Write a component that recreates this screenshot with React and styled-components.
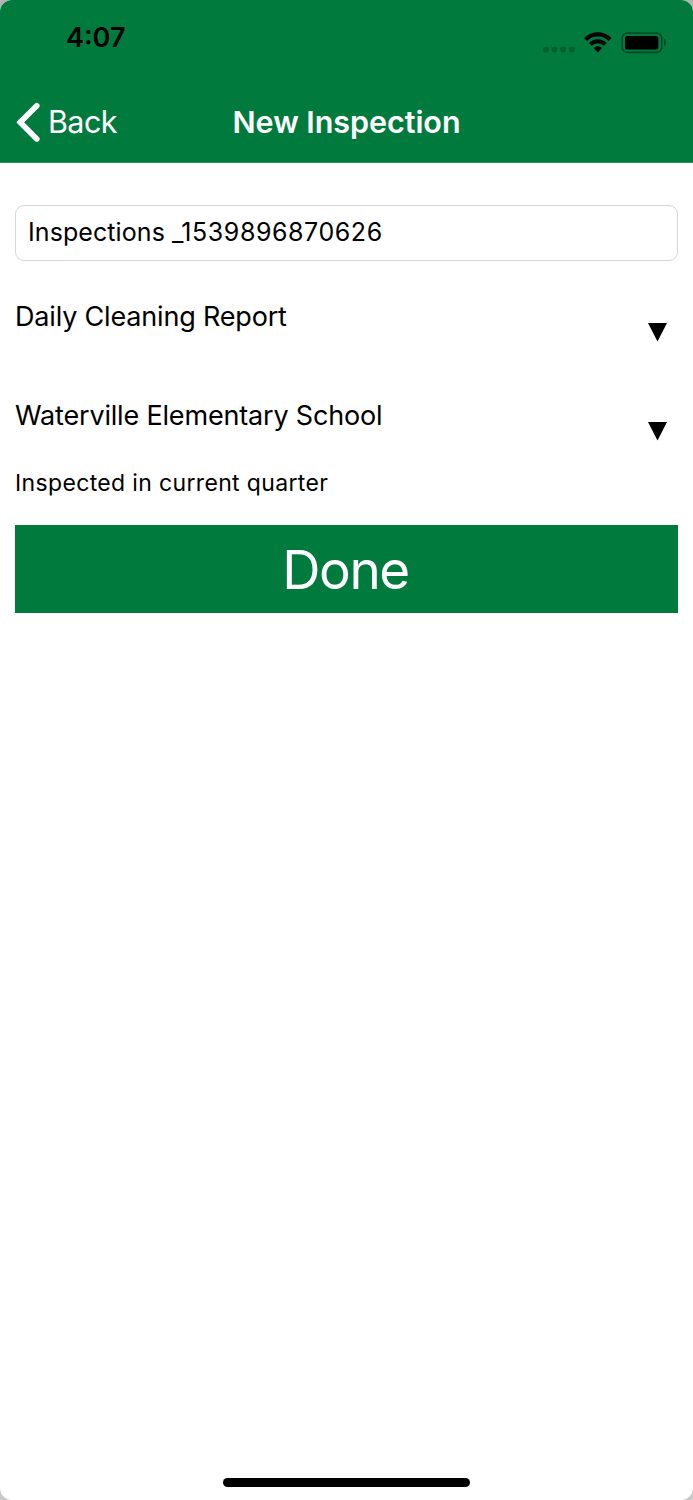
import styled, { createGlobalStyle } from "styled-components";

export default function App() {
  return (
    <>
      <GlobalStyle />
      <Phone>
        <Header>
          <StatusBar>
            <Clock>4:07</Clock>
            <StatusIcons />
          </StatusBar>
          <NavBar>
            <BackButton>
              <svg width="26" height="40" viewBox="0 0 26 40" fill="none">
                <path d="M21.8 3.7 L5.2 20.3 L21.8 36.9" stroke="#fff" strokeWidth="5.6" strokeLinecap="round" strokeLinejoin="miter" />
              </svg>
              <span>Back</span>
            </BackButton>
            <Title>New Inspection</Title>
          </NavBar>
        </Header>

        <Form>
          <NameField>
            Inspections <NameStamp>_1539896870626</NameStamp>
          </NameField>
          <Picker label="Daily Cleaning Report" />
          <Picker label="Waterville Elementary School" />
          <Hint>Inspected in current quarter</Hint>
          <DoneButton>Done</DoneButton>
        </Form>

        <HomeIndicator />
      </Phone>
    </>
  );
}

const Picker = ({ label }) => (
  <PickerRow>
    <PickerLabel>{label}</PickerLabel>
    <Caret width="20" height="19" viewBox="0 0 20 19">
      <path d="M0 0 H19 L9.5 18.4 Z" />
    </Caret>
  </PickerRow>
);

const StatusIcons = () => (
  <Icons>
    <svg width="32" height="24" viewBox="0 0 32 24" fill="#000" fillOpacity="0.22">
      {[0, 8.7, 17.4, 26.1].map(x => (
        <rect key={x} x={x} y="16.8" width="5.6" height="5.6" rx="1.8" />
      ))}
    </svg>
    <svg width="28" height="24" viewBox="0 0 28 24" fill="none" stroke="#000" strokeWidth="4.2">
      <path d="M1.5 9.4 C8.4 2.7 19.2 2.7 26.1 9.4" />
      <path d="M6.3 14.3 C10.6 10.2 17 10.2 21.3 14.3" strokeWidth="3.8" />
      <path d="M9.6 18 C12.1 15.7 15.5 15.7 18 18 L13.8 22.4 Z" fill="#000" stroke="none" />
    </svg>
    <svg width="46" height="24" viewBox="0 0 46 24">
      <rect x="1.2" y="3" width="39.6" height="19.4" rx="5.2" fill="none" stroke="#000" strokeOpacity="0.4" strokeWidth="1.6" />
      <rect x="4" y="5.9" width="33.4" height="13.6" rx="2.6" />
      <path d="M43.1 9.1 C45.6 10.3 45.6 15.1 43.1 16.3 Z" fillOpacity="0.45" />
    </svg>
  </Icons>
);

// ======= STYLED COMPONENTS ======= //

const GlobalStyle = createGlobalStyle`
  * {
    box-sizing: border-box;
  }

  body {
    margin: 0;
    background: linear-gradient(#b4b4b4, #c8c8c8);
    font-family: Inter, "Liberation Sans", sans-serif;
    color: #000;
  }

  button {
    font-family: inherit;
  }
`;

const Phone = styled.div`
  display: flex;
  flex-direction: column;
  width: 693px;
  height: 1500px;
  background: #fff;
  border-radius: 12px;
  overflow: hidden;
`;

const Header = styled.header`
  height: 163px;
  background: #007a3d;
  border-bottom: 1px solid #2b9060;
`;

const StatusBar = styled.div`
  display: flex;
  justify-content: space-between;
  height: 82px;
  padding: 18px 26px 0 66px;
`;

const Clock = styled.span`
  font-size: 27px;
  font-weight: 600;
  line-height: 40px;
`;

const Icons = styled.div`
  display: flex;
  gap: 9px;
  height: 24px;
  margin-top: 12px;
`;

const NavBar = styled.nav`
  display: grid;
  grid-template-columns: 1fr auto 1fr;
  align-items: center;
  height: 80px;
  padding: 0 15px;
  color: #fff;
`;

const BackButton = styled.button`
  display: flex;
  align-items: center;
  gap: 7px;
  padding: 0;
  border: none;
  background: none;
  color: inherit;
  font-size: 30.5px;
  line-height: 40px;
  letter-spacing: -0.6px;
`;

const Title = styled.h1`
  margin: 0;
  font-size: 30.5px;
  font-weight: 600;
  line-height: 40px;
  letter-spacing: -0.05px;
`;

const Form = styled.main`
  display: flex;
  flex-direction: column;
  flex: 1;
  padding: 42px 15px 0;
`;

const NameField = styled.div`
  height: 56px;
  padding: 0 12px;
  border: 1px solid #d6d6d6;
  border-radius: 9px;
  font-size: 25px;
  line-height: 53px;
  letter-spacing: 0.08px;
`;

const NameStamp = styled.span`
  letter-spacing: 0.57px;
`;

const PickerRow = styled.div`
  display: flex;
  justify-content: space-between;
  height: 58px;
  margin-top: 36px;
  padding-right: 10px;

  & + & {
    margin-top: 40.5px;
  }
`;

const PickerLabel = styled.span`
  font-size: 27px;
  line-height: 40px;
  letter-spacing: -0.18px;
`;

const Caret = styled.svg`
  margin-top: 26px;
`;

const Hint = styled.p`
  height: 57px;
  margin: 14.5px 0 0;
  font-size: 23px;
  line-height: 30px;
  letter-spacing: 0.35px;
`;

const DoneButton = styled.button`
  height: 88px;
  padding: 2px 2px 0 0;
  border: none;
  background: #007a3d;
  color: #fff;
  font-size: 53px;
  line-height: 86px;
  letter-spacing: -1.4px;
`;

const HomeIndicator = styled.div`
  width: 247px;
  height: 9px;
  margin: 0 auto 13px;
  border-radius: 5px;
  background: #000;
`;
